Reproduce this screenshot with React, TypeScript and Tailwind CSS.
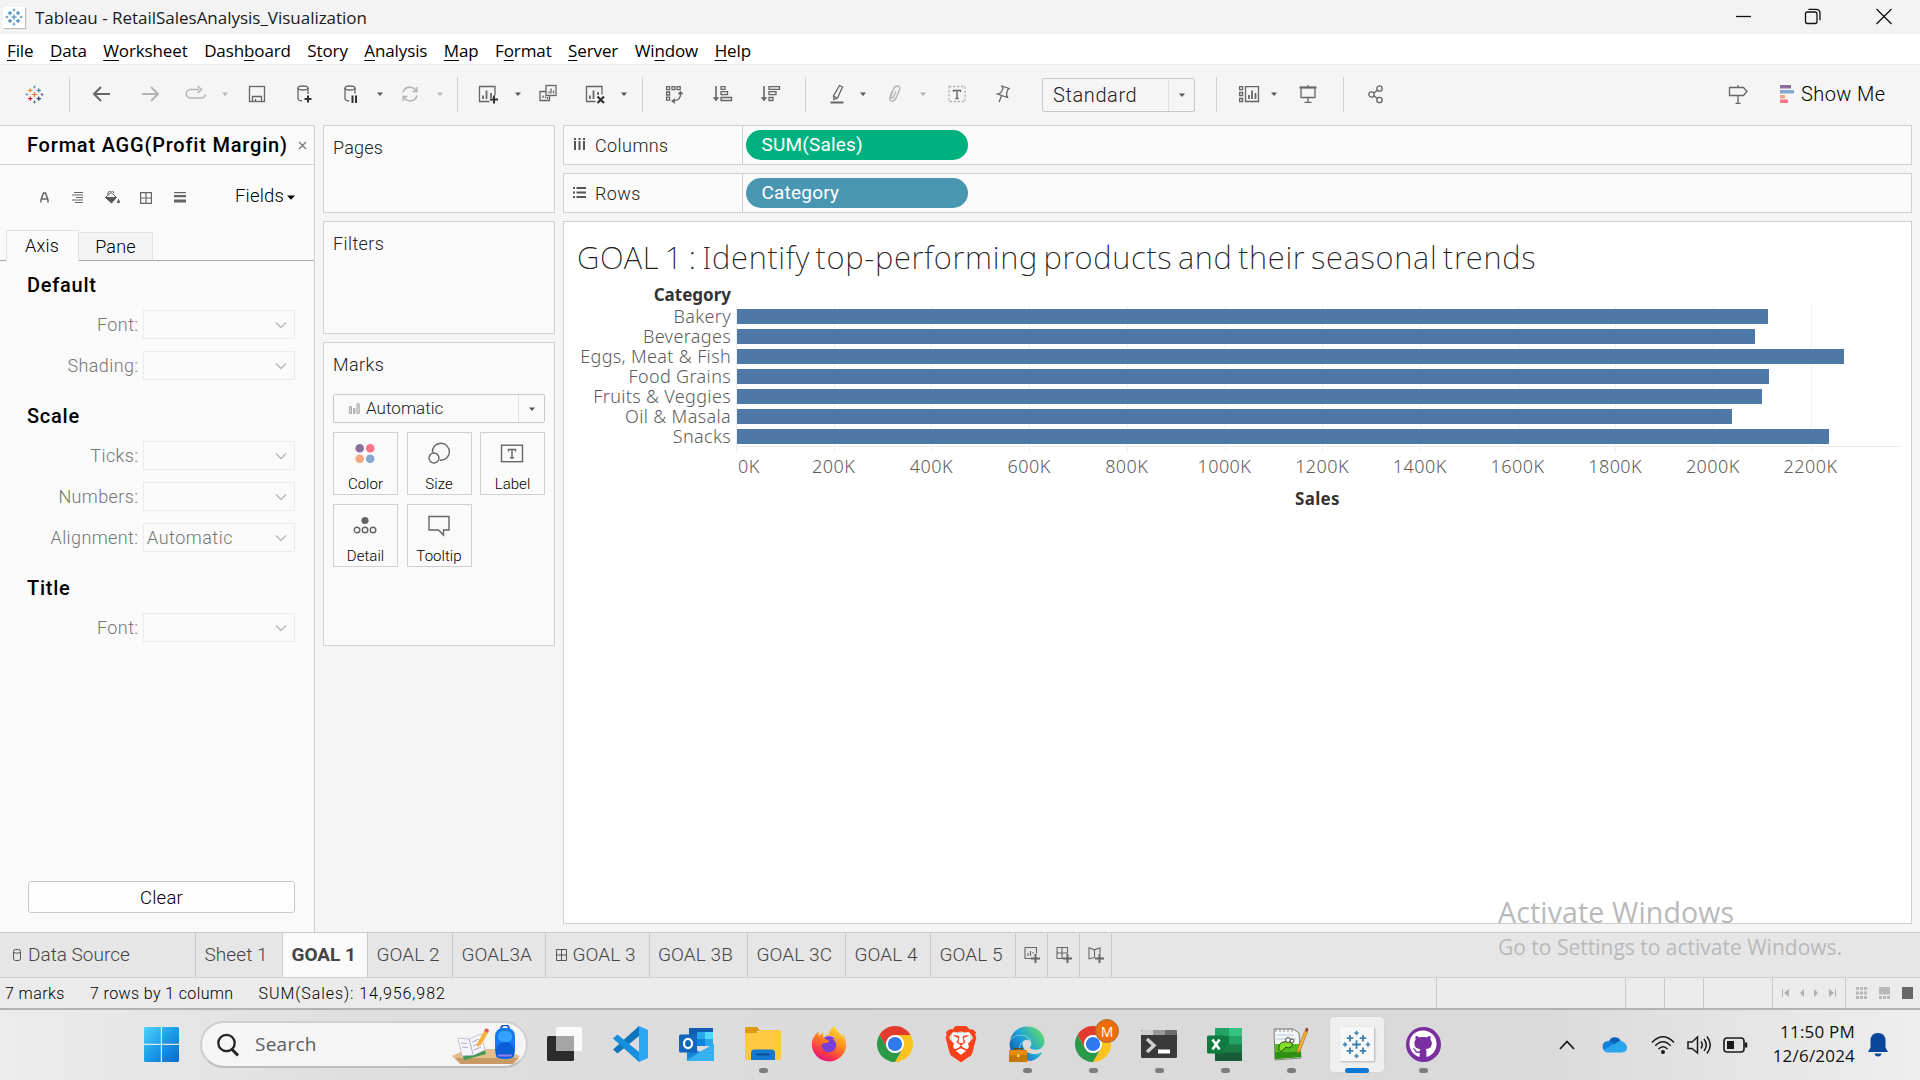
import React from "react";
import type { ReactNode } from "react";
import { FaEdge, FaFirefoxBrowser, FaGithub } from "react-icons/fa";
import { SiBrave } from "react-icons/si";

const UI = "font-['Roboto','Liberation_Sans',sans-serif]";
const SEGOE = "font-['Open_Sans','Noto_Sans',sans-serif]";
const TABLEAU = "font-['Noto_Sans','Open_Sans',sans-serif]";

/* ---------- shared drawings ---------- */

const PLUSES: [number, number, number, string][] = [
  [12, 12, 3.6, "#e8762c"],
  [6.6, 6.8, 2.7, "#eb912c"],
  [17.4, 6.8, 2.7, "#59879b"],
  [6.6, 17.2, 2.7, "#c72035"],
  [17.4, 17.2, 2.7, "#1f457e"],
  [12, 2.5, 1.8, "#7199a6"],
  [12, 21.5, 1.8, "#5b6591"],
  [2.5, 12, 1.8, "#7199a6"],
  [21.5, 12, 1.8, "#5b6591"],
];

function TableauMark({ size, mono }: { size: number; mono?: string }) {
  return (
    <svg width={size} height={size} viewBox="0 0 24 24" fill="none">
      {PLUSES.map(([x, y, r, c], i) => (
        <path
          key={i}
          d={`M${x - r} ${y}H${x + r}M${x} ${y - r}V${y + r}`}
          stroke={mono ?? c}
          strokeWidth={r > 2 ? 1.5 : 1.2}
        />
      ))}
    </svg>
  );
}

function Ico({ children, dim, ml }: { children: ReactNode; dim?: boolean; ml: string }) {
  return (
    <svg
      width="24"
      height="24"
      viewBox="0 0 24 24"
      fill="none"
      stroke={dim ? "#b4b4b4" : "#666666"}
      strokeWidth="1.3"
      className={`shrink-0 ${ml}`}
    >
      {children}
    </svg>
  );
}

function Caret({ ml, dim }: { ml: string; dim?: boolean }) {
  return (
    <svg width="8" height="8" viewBox="0 0 8 8" className={`shrink-0 ${ml}`}>
      <path d="M1 2.400h6L4 6z" fill={dim ? "#b4b4b4" : "#555"} />
    </svg>
  );
}

function Sep({ ml }: { ml: string }) {
  return <div className={`h-[35px] w-px shrink-0 bg-[#d0d0d0] ${ml}`} />;
}

/* ---------- top bars ---------- */

function TitleBar() {
  return (
    <div className={`flex h-[34px] shrink-0 items-center bg-[#f3f3f3] ${SEGOE}`}>
      <div className="ml-[3px] flex h-[21px] w-[22px] items-center justify-center bg-white shadow-[1px_1px_1px_#bbb]">
        <TableauMark size={18} mono="#3a87b7" />
      </div>
      <span className="ml-[10px] pt-[2px] text-[17px] tracking-[-0.02px] text-[#1a1a1a]">
        Tableau - RetailSalesAnalysis_Visualization
      </span>
      <svg className="ml-auto mr-[28px]" width="156" height="18" viewBox="0 0 156 18" fill="none" stroke="#111" strokeWidth="1.3">
        <path d="M0 8.500h15" />
        <rect x="69.500" y="4" width="11.500" height="11.500" rx="2" />
        <path d="M72.500 1.300h7.500q4 0 4 4v7" />
        <path d="M140.500 1l15 15M155.500 1l-15 15" />
      </svg>
    </div>
  );
}

const MENU: [string, string, string][] = [
  ["", "F", "ile"],
  ["", "D", "ata"],
  ["", "W", "orksheet"],
  ["Dash", "b", "oard"],
  ["S", "t", "ory"],
  ["", "A", "nalysis"],
  ["", "M", "ap"],
  ["F", "o", "rmat"],
  ["", "S", "erver"],
  ["Wi", "n", "dow"],
  ["", "H", "elp"],
];

function MenuBar() {
  return (
    <div className={`flex h-[30px] shrink-0 items-center gap-[16.5px] bg-white pl-[7px] pt-[3px] text-[17px] tracking-[-0.12px] text-black ${SEGOE}`}>
      {MENU.map(([a, b, c]) => (
        <span key={a + b + c}>
          {a}
          <span className="underline decoration-1 underline-offset-[3px]">{b}</span>
          {c}
        </span>
      ))}
    </div>
  );
}

function Toolbar() {
  return (
    <div className={`flex h-[61px] shrink-0 items-center border-t border-[#ececec] bg-[#f5f5f5] pb-[2px] pr-[35px] ${UI}`}>
      <div className="ml-[25px] mr-px">
        <TableauMark size={19} />
      </div>
      <Sep ml="ml-[24px]" />
      <Ico ml="ml-[20px]">
        <path d="M20 12H5M11 5l-7 7 7 7" strokeWidth="2" />
      </Ico>
      <Ico ml="ml-[24px]" dim>
        <path d="M4 12h15M13 5l7 7-7 7" strokeWidth="2" />
      </Ico>
      <Ico ml="ml-[22px]" dim>
        <path d="M15 7.500H6.500a4 4 0 0 0 0 8.500h11a4 4 0 0 0 3.800-3.500M13.500 4l4 3.500-4 3.500" strokeWidth="1.600" />
      </Ico>
      <Caret ml="ml-[13px]" dim />
      <Ico ml="ml-[16px]">
        <rect x="4.500" y="4.500" width="15" height="15" />
        <path d="M7.500 19.500v-5h9v5M10.500 19.500v-2.500" />
      </Ico>
      <Ico ml="ml-[24px]">
        <ellipse cx="10" cy="6" rx="5" ry="2" />
        <path d="M5 6v10.500q0 2 4 2.500M15 6v6" />
        <path d="M15 13.500v7M11.500 17h7" stroke="#333" strokeWidth="2" />
      </Ico>
      <Ico ml="ml-[22px]">
        <ellipse cx="11" cy="6" rx="5" ry="2" />
        <path d="M6 6v10.500q0 2 4 2.500M16 6v5.500" />
        <path d="M13.500 13.500v7.500M17 13.500v7.500" stroke="#333" strokeWidth="2" />
      </Ico>
      <Caret ml="ml-[13px]" />
      <Ico ml="ml-[14px]" dim>
        <path d="M5 10.500a7 7 0 0 1 13-1.500M19 13.500a7 7 0 0 1-13 1.500M18.800 5v4.500h-4.300M5.200 19v-4.500h4.300" strokeWidth="1.500" />
      </Ico>
      <Caret ml="ml-[14px]" dim />
      <Sep ml="ml-[13px]" />
      <Ico ml="ml-[18px]">
        <path d="M13.500 19.500h-10v-15h15.500v9" />
        <path d="M7 17v-3.500M10.500 17V8.500M15 16v-5" strokeWidth="1.800" />
        <path d="M18 13.500v8M14 17.500h8" stroke="#333" strokeWidth="2" />
      </Ico>
      <Caret ml="ml-[14px]" />
      <Ico ml="ml-[14px]">
        <rect x="10" y="3.500" width="10" height="10" />
        <path d="M10 9.500H4v9h9.500v-5M7 16v-2.500M9.500 16v-1.500M13 11.500V9.500M15 11.500V6.500M17.500 11.500V8.500M11.500 17v-2" />
      </Ico>
      <Ico ml="ml-[23px]">
        <path d="M12.500 19.500h-9v-15h15.500v8" />
        <path d="M7 17v-3.500M10.500 17V8.500M15 13V10" strokeWidth="1.800" />
        <path d="M14.500 14.500l6.500 6.500M21 14.500l-6.500 6.500" stroke="#333" strokeWidth="2.200" />
      </Ico>
      <Caret ml="ml-[13px]" />
      <Sep ml="ml-[14px]" />
      <Ico ml="ml-[19px]">
        <path d="M4.600 4.600h3v3h-3zM10 4.600h3v3h-3zM15.200 4.600h3v3h-3zM4.600 10h3v3h-3zM4.600 15.200h3v3h-3z" />
        <path d="M18.500 10.500q1 8-7.500 8.500" strokeWidth="1.500" />
        <path d="M16 12l2.500-3 2.500 3zM12.500 16.500l-3 2.500 3 2.500z" fill="#666" strokeWidth="0.500" />
      </Ico>
      <Ico ml="ml-[25px]">
        <path d="M5 4v13" strokeWidth="1.600" />
        <path d="M2.200 15.500h5.600L5 19z" fill="#666" strokeWidth="0.500" />
        <path d="M10 4.600h4v2.800h-4zM10 9.600h6.500v3H10zM10 15.500h10.500v3H10z" />
      </Ico>
      <Ico ml="ml-[24px]">
        <path d="M5 4v13" strokeWidth="1.600" />
        <path d="M2.200 15.500h5.600L5 19z" fill="#666" strokeWidth="0.500" />
        <path d="M10 4.600h10.500v2.800H10zM10 9.600h7v3h-7zM10 15.500h4v3h-4z" />
      </Ico>
      <Sep ml="ml-[22px]" />
      <Ico ml="ml-[20px]">
        <path d="M13.500 3.500l3 1.500-5 11-3.500 1.500-.5-3.500zM7.500 14l3.500 2" />
        <path d="M4.500 20.500h13" strokeWidth="2" />
      </Ico>
      <Caret ml="ml-[9px]" />
      <Ico ml="ml-[16px]" dim>
        <path d="M9 9l-2 6q-1 4 2 4t4-3l3.500-8q1-4-2-4t-4 3L8 14q-.5 2 1 2t2-2l2-5" strokeWidth="1.400" />
      </Ico>
      <Caret ml="ml-[12px]" dim />
      <Ico ml="ml-[18px]" dim>
        <rect x="4" y="4.500" width="16" height="15" strokeDasharray="2.500 1.500" />
        <path d="M8.500 10V8.500h7V10M12 8.500v8M10.300 16.500h3.400" stroke="#666" strokeWidth="1.400" />
      </Ico>
      <Ico ml="ml-[22px]">
        <path d="M11 4l7 2.500-1.500 1.500-1 4.500 1 3-10-3.500 3-1 2.500-4.500zM10.500 14L8 20" />
      </Ico>
      <div className="ml-[27px] mt-px flex h-[34px] w-[153px] shrink-0 items-center rounded-[2px] border border-[#c8c8c8] bg-[#f5f5f5]">
        <span className="flex-1 pl-[10px] text-[20px] font-light tracking-[0.6px] text-[#222]">Standard</span>
        <div className="flex h-full w-[26px] items-center justify-center border-l border-[#e0e0e0]">
          <Caret ml="" />
        </div>
      </div>
      <Sep ml="ml-[21px]" />
      <Ico ml="ml-[20px]">
        <path d="M2.600 4.600h3v3h-3zM2.600 10.500h3v3h-3zM2.600 16.500h3v3h-3zM8.500 4.600h13v14.900h-13z" />
        <path d="M12 17v-4M15 17V8.500M18.500 17v-6" strokeWidth="1.800" />
      </Ico>
      <Caret ml="ml-[9px]" />
      <Ico ml="ml-[18px]">
        <path d="M3.500 5.500h17" strokeWidth="2.200" />
        <path d="M5 6.500v9h14v-9M12 15.500v5M8.500 20.300h7M12 3v2" />
      </Ico>
      <Sep ml="ml-[23px]" />
      <Ico ml="ml-[20px]">
        <circle cx="7.500" cy="12.500" r="2.700" />
        <circle cx="15.500" cy="6.500" r="2.700" />
        <circle cx="15.500" cy="18" r="2.700" />
        <path d="M10 11l3.500-3M10 14l3.500 2.500" />
      </Ico>
      <Ico ml="ml-auto">
        <path d="M3.500 5.500h14l3.500 4-3.500 4h-14zM12 13.500v8M9.500 21.300h5M12 3v2.500" />
      </Ico>
      <svg className="ml-[30px] shrink-0" width="14" height="20" viewBox="0 0 14 20">
        <path d="M0 1h11v3.500H0z" fill="#8a6f9c" />
        <path d="M0 6h14v3.500H0z" fill="#84a9d0" />
        <path d="M0 11h5v3.500H0z" fill="#f4a582" />
        <path d="M0 15.500h8v3.500H0z" fill="#fb7185" />
      </svg>
      <span className="ml-[7px] w-[84px] whitespace-nowrap text-[20px] font-light tracking-[0.4px] text-black">Show Me</span>
    </div>
  );
}

/* ---------- format pane ---------- */

function Field({ label, value, mt }: { label: string; value?: string; mt: string }) {
  return (
    <div className={`flex h-[29px] items-center ${mt}`}>
      <span className="w-[138.500px] whitespace-nowrap text-right text-[18px] tracking-[0.4px] text-[#757575]">{label}</span>
      <div className="ml-[4.500px] flex h-[29px] w-[152px] items-center justify-between border border-[#ebebeb] pl-[3px] pr-[7px]">
        <span className="text-[18px] tracking-[0.500px] text-[#757575]">{value}</span>
        <svg width="12" height="8" viewBox="0 0 12 8" fill="none" stroke="#b8b8b8" strokeWidth="1.300">
          <path d="M1 1.500l5 5 5-5" />
        </svg>
      </div>
    </div>
  );
}

function Heading({ children, mt }: { children: string; mt: string }) {
  return <div className={`flex h-7 items-center pl-[27px] text-[20px] font-medium tracking-[0.75px] text-black ${mt}`}>{children}</div>;
}

function FormatPane() {
  return (
    <div className={`flex w-[315px] shrink-0 flex-col border-r border-t border-[#d0d0d0] bg-[#fafafa] font-light ${UI}`}>
      <div className="flex h-[39px] shrink-0 items-center border-b border-[#d0d0d0] pl-[27px]">
        <span className="w-[271px] whitespace-nowrap text-[20px] font-medium tracking-[0.8px] text-black">Format AGG(Profit Margin)</span>
        <svg width="9" height="9" viewBox="0 0 9 9" stroke="#777" strokeWidth="1.300">
          <path d="M1 1l7 7M8 1L1 8" />
        </svg>
      </div>
      <div className="flex h-[65px] shrink-0 items-center">
        <svg className="ml-[40px]" width="9" height="11" viewBox="0 0 9 11" fill="none" stroke="#666" strokeWidth="1.500">
          <path d="M1 10.500V8L3.500 1h2L8 8v2.500M1.500 7h6" />
        </svg>
        <svg className="ml-[23px]" width="11" height="11" viewBox="0 0 11 11" stroke="#666" strokeWidth="1">
          <path d="M2 .5h9M0 3h11M4 5.500h7M0 8h11M3 10.500h8" />
        </svg>
        <svg className="ml-[21px]" width="17" height="14" viewBox="0 0 17 14" fill="none" stroke="#555">
          <path d="M2 6l5-4.500 5 4.500M4 4a3 3 0 0 1 6-2" />
          <path d="M1.500 6.500h11L7.500 12z" fill="#555" />
          <path d="M14.500 8.500l1 3h-2z" fill="#555" />
        </svg>
        <svg className="ml-[19px]" width="12" height="12" viewBox="0 0 12 12" fill="none" stroke="#666">
          <path d="M.6.6h10.800v10.800H.6zM6 .6v10.800M.6 6h10.800" strokeWidth="1.200" />
        </svg>
        <svg className="ml-[22px]" width="12" height="11" viewBox="0 0 12 11" fill="#666">
          <path d="M0 0h12v1.200H0zM0 3h12v2.200H0zM0 7.500h12v3H0z" />
        </svg>
        <span className="-mt-px ml-[49px] text-[18.500px] tracking-[0.200px] text-black">Fields</span>
        <svg className="ml-[3px]" width="8" height="5" viewBox="0 0 8 5">
          <path d="M0 .5h8L4 4.700z" />
        </svg>
      </div>
      <div className="flex h-[31px] shrink-0 items-end text-[18px] tracking-[0.2px] text-black">
        <div className="h-full w-[6px] border-b border-[#a6a6a6]" />
        <div className="flex h-full w-[73px] items-center justify-center rounded-t-[2px] border border-b-0 border-[#e2e2e2] pb-[2px] pr-px">
          Axis
        </div>
        <div className="flex h-[29px] w-[74px] items-center justify-center border-b border-r border-t border-[#e2e2e2] border-b-[#a6a6a6] bg-[#f4f4f4]">
          Pane
        </div>
        <div className="h-full flex-1 border-b border-[#a6a6a6]" />
      </div>
      <Heading mt="mt-[10px]">Default</Heading>
      <Field mt="mt-[11px]" label="Font:" />
      <Field mt="mt-[12px]" label="Shading:" />
      <Heading mt="mt-[22px]">Scale</Heading>
      <Field mt="mt-[11px]" label="Ticks:" />
      <Field mt="mt-[12px]" label="Numbers:" />
      <Field mt="mt-[12px]" label="Alignment:" value="Automatic" />
      <Heading mt="mt-[22px]">Title</Heading>
      <Field mt="mt-[11px]" label="Font:" />
      <button className="mb-[19px] ml-[28px] mt-auto h-8 w-[267px] rounded-[3px] border border-[#c8c8c8] bg-[#fdfdfd] pt-[3px] text-[18.500px] tracking-[0.200px] text-black">
        Clear
      </button>
    </div>
  );
}

/* ---------- shelves ---------- */

function MarkButton({ label, children, w }: { label: string; children: ReactNode; w: string }) {
  return (
    <div className={`flex h-[63px] flex-col items-center border border-[#d0d0d0] ${w}`}>
      <svg className="mr-px mt-[7px]" width="28" height="28" viewBox="0 0 28 28" fill="none" stroke="#666" strokeWidth="1.400">
        {children}
      </svg>
      <span className="mt-[6px] text-[15px] leading-[20px] text-black">{label}</span>
    </div>
  );
}

function Cards() {
  return (
    <div className={`ml-2 flex w-[232px] shrink-0 flex-col text-[18px] font-light tracking-[0.2px] text-[#222] ${UI}`}>
      <div className="h-[88px] border border-[#d0d0d0] bg-[#fafafa] pl-[9px] pt-[8px]">Pages</div>
      <div className="mt-2 h-[113px] border border-[#d0d0d0] bg-[#fafafa] pl-[9px] pt-[8px] tracking-[0.400px]">Filters</div>
      <div className="mt-2 flex h-[304px] flex-col border border-[#d0d0d0] bg-[#fafafa] px-[9px] pt-[8px]">
        <span className="tracking-[0.400px]">Marks</span>
        <div className="mt-[16px] flex h-[29px] shrink-0 items-center rounded-[2px] border border-[#c8c8c8]">
          <svg className="ml-[15px] shrink-0" width="11" height="11" viewBox="0 0 11 11" fill="#d8d8d8" stroke="#aaa">
            <path d="M.5 3.500h2v7h-2zM4.500 5.500h1.500v5H4.500zM8 .8h2.200v9.700H8z" />
          </svg>
          <span className="ml-[6px] flex-1 text-[17px] tracking-[0.050px]">Automatic</span>
          <div className="flex h-full w-[26px] items-center justify-center border-l border-[#e0e0e0]">
            <Caret ml="" />
          </div>
        </div>
        <div className="mt-[9px] flex flex-wrap gap-x-[8.500px] gap-y-[9px] tracking-[0.050px]">
          <MarkButton label="Color" w="w-[65px]">
            <g stroke="none">
              <circle cx="8.700" cy="8.300" r="4.300" fill="#8a6f9c" />
              <circle cx="19.200" cy="8.300" r="4.300" fill="#fb7185" />
              <circle cx="8.700" cy="18.800" r="4.300" fill="#f4a67c" />
              <circle cx="19.200" cy="18.800" r="4.300" fill="#84a9d0" />
            </g>
          </MarkButton>
          <MarkButton label="Size" w="w-[65px]">
            <path d="M7.400 12.500a8.500 8.500 0 1 1 7.400 7.700" />
            <circle cx="9" cy="18" r="5" />
          </MarkButton>
          <MarkButton label="Label" w="w-[65px]">
            <rect x="3.500" y="5.200" width="21" height="16.500" />
            <path d="M10.500 11.500v-2h7v2M14 9.500v8M12 17.700h4" />
          </MarkButton>
          <MarkButton label="Detail" w="w-[65px]">
            <circle cx="14" cy="8.500" r="3.600" fill="#666" stroke="none" />
            <circle cx="6" cy="18" r="2.800" />
            <circle cx="14" cy="18" r="2.800" />
            <circle cx="22" cy="18" r="2.800" />
          </MarkButton>
          <MarkButton label="Tooltip" w="w-[65px]">
            <path d="M4 4.500h20V18h-5.500v5l-5-5H4z" />
          </MarkButton>
        </div>
      </div>
    </div>
  );
}

function Shelf({ label, pill, color, icon }: { label: string; pill: string; color: string; icon: ReactNode }) {
  return (
    <div className={`flex h-10 shrink-0 items-center border border-[#d0d0d0] bg-[#fafafa] ${UI}`}>
      <svg className="-mt-px ml-[9px]" width="13" height="13" viewBox="0 0 13 13" fill="#555">
        {icon}
      </svg>
      <span className="ml-[9px] flex-1 whitespace-nowrap text-[18px] font-light tracking-[0.42px] text-[#222]">{label}</span>
      <div className="flex h-full w-[1169px] items-center border-l border-[#d0d0d0] pl-[3px]">
        <div className={`flex h-[30px] w-[222px] items-center rounded-full pl-[15.500px] pt-px text-[19px] tracking-[0.200px] text-white ${color}`}>{pill}</div>
      </div>
    </div>
  );
}

/* ---------- view ---------- */

const SALES: [string, number][] = [
  ["Bakery", 1031],
  ["Beverages", 1018],
  ["Eggs, Meat & Fish", 1107],
  ["Food Grains", 1032],
  ["Fruits & Veggies", 1025],
  ["Oil & Masala", 995],
  ["Snacks", 1092],
];
const STEP = 97.7;

function View() {
  return (
    <div className={`mt-2 flex h-[703px] shrink-0 flex-col border border-[#d0d0d0] bg-white ${TABLEAU}`}>
      <h1 className="mt-[10px] h-[51px] whitespace-nowrap pl-[13px] text-[31px] font-extralight leading-[50px] tracking-[0.720px] [word-spacing:-3.2px] text-[#222]">
        GOAL 1 : Identify top-performing products and their seasonal trends
      </h1>
      <div className="flex h-[23px] items-center">
        <span className="w-[167px] text-right text-[17px] font-bold text-[#333]">Category</span>
      </div>
      <div className="flex">
        <div className="w-[167px] shrink-0 text-right text-[18px] font-light tracking-[0.350px] text-[#5c5c5c]">
          {SALES.map(([n]) => (
            <div key={n} className="h-5 whitespace-nowrap leading-[20px]">
              {n}
            </div>
          ))}
        </div>
        <div className="relative ml-[5px] h-[146px] w-[1164px]">
          {Array.from({ length: 12 }, (_, i) => (
            <div key={i} className="absolute top-0 h-full w-px bg-[#f0f0f0]" style={{ left: Math.round(i * STEP) }} />
          ))}
          <div className="absolute left-0 top-[140px] h-px w-full bg-[#eeeeee]" />
          <div className="relative flex flex-col gap-[5px] pl-px pt-[3px]">
            {SALES.map(([n, w]) => (
              <div key={n} className="h-[15px] bg-[#4e79a7]" style={{ width: w }} />
            ))}
          </div>
        </div>
      </div>
      <div className="flex h-[28px] items-center pl-[172px] text-[18px] font-light tracking-[0.450px] text-[#5c5c5c]">
        <span className="w-[48.850px] pl-[2px]">0K</span>
        {Array.from({ length: 11 }, (_, i) => (
          <span key={i} className="w-[97.700px] text-center">
            {(i + 1) * 200}K
          </span>
        ))}
      </div>
      <div className="flex h-[38px] items-center justify-center pl-[160px] text-[17px] font-bold tracking-[0.300px] text-[#333]">Sales</div>
    </div>
  );
}

/* ---------- sheet tabs and status ---------- */

const TABS: [string, string][] = [
  ["Sheet 1", "w-[87px]"],
  ["GOAL 1", "w-[85px]"],
  ["GOAL 2", "w-[85px]"],
  ["GOAL3A", "w-[93px]"],
  ["GOAL 3", "w-[103.500px]"],
  ["GOAL 3B", "w-[98.500px]"],
  ["GOAL 3C", "w-[98px]"],
  ["GOAL 4", "w-[85px]"],
  ["GOAL 5", "w-[85px]"],
];

function NewTab({ children }: { children: ReactNode }) {
  return (
    <div className="flex h-full w-8 items-center justify-center border-r border-[#cacaca]">
      <svg width="18" height="18" viewBox="0 0 18 18" fill="none" stroke="#666" strokeWidth="1.100">
        {children}
        <path d="M12.500 8v9M8 12.500h9" strokeWidth="2" />
      </svg>
    </div>
  );
}

function SheetTabs() {
  return (
    <div className={`flex h-[45px] shrink-0 items-center border-t border-[#cacaca] bg-[#e6e6e6] text-[19px] text-[#444] ${UI}`}>
      <div className="flex h-full w-[196px] items-center border-r border-[#cacaca] font-light">
        <svg className="ml-[13px]" width="8" height="12" viewBox="0 0 8 12" fill="none" stroke="#555">
          <rect x=".5" y=".5" width="7" height="11" rx="2" />
          <path d="M.5 3.500q3.500 1.500 7 0" />
        </svg>
        <span className="ml-[7px] pt-px text-[19px]">Data Source</span>
      </div>
      {TABS.map(([t, w]) => (
        <div
          key={t}
          className={`flex h-full items-center whitespace-nowrap border-r border-[#cacaca] pl-[8.500px] ${w} ${
            t === "GOAL 1" ? "bg-[#fafafa] font-bold" : "pt-px font-light tracking-[0.080px]"
          }`}
        >
          {t === "GOAL 3" && (
            <svg className="-mt-[2px] ml-px mr-[6px]" width="11" height="12" viewBox="0 0 11 12" fill="none" stroke="#555">
              <path d="M.5.500h10v11H.5zM5.500.500v11M.5 6h10" />
            </svg>
          )}
          {t}
        </div>
      ))}
      <NewTab>
        <path d="M8 12.500H2v-11h11.500v6M5 10V7M7.500 10V5M10 7.500V6" />
      </NewTab>
      <NewTab>
        <path d="M8 12.500H2v-11h10.500v6M7 1.500v11M2 7h10.500" />
      </NewTab>
      <NewTab>
        <path d="M7.500 11.500L2 12.800v-11l5.500 2 5.500-2v6M7.500 3.800V12" />
      </NewTab>
    </div>
  );
}

function StatusBar() {
  return (
    <div className={`flex h-[31px] shrink-0 items-center border-t border-[#cfcfcf] bg-[#ebebeb] pl-[5px] text-[16px] font-light text-black ${UI}`}>
      <span className="w-[85px] pt-px tracking-[0.400px]">7 marks</span>
      <span className="w-[168.500px] pt-px tracking-[0.380px]">7 rows by 1 column</span>
      <span className="pt-px tracking-[0.940px]">SUM(Sales): 14,956,982</span>
      <div className="ml-auto h-full w-[189px] border-l border-[#cacaca]" />
      <div className="h-full w-[39px] border-l border-[#cacaca]" />
      <div className="h-full w-[39px] border-l border-[#cacaca]" />
      <div className="h-full w-[69px] border-l border-[#cacaca]" />
      <div className="flex h-full w-[73px] items-center justify-center border-l border-[#cacaca]">
        <svg width="56" height="10" viewBox="0 0 56 10" fill="#b0b0b0">
          <path d="M1 1h1v8H1zM8 1v8L3 5zM23 1v8l-4-4zM33 1v8l4-4zM48 1v8l5-4zM54 1h1v8h-1z" />
        </svg>
      </div>
      <div className="flex h-full w-[75px] items-center gap-[12px] border-l border-[#cacaca] pl-[10px]">
        <svg width="11" height="12" viewBox="0 0 11 12" fill="#b8b8b8">
          <path d="M0 0h3v3H0zM4 0h3v3H4zM8 0h3v3H8zM0 4.500h3v3H0zM4 4.500h3v3H4zM8 4.500h3v3H8zM0 9h3v3H0zM4 9h3v3H4zM8 9h3v3H8z" />
        </svg>
        <svg width="11" height="12" viewBox="0 0 11 12" fill="#b8b8b8">
          <path d="M0 0h11v7.500H0zM0 9h3v3H0zM4 9h3v3H4zM8 9h3v3H8z" />
        </svg>
        <div className="h-[12px] w-[11px] bg-[#666]" />
      </div>
    </div>
  );
}

/* ---------- taskbar ---------- */

const CHROME_ARM = "M24 13H43.050A22 22 0 0 0 4.950 13L14.470 29.500A11 11 0 0 1 24 13Z";

function Chrome() {
  return (
    <svg width="36" height="36" viewBox="2 2 44 44">
      <path d={CHROME_ARM} fill="#e33b2e" />
      <path d={CHROME_ARM} fill="#fcc31e" transform="rotate(120 24 24)" />
      <path d={CHROME_ARM} fill="#2a9a48" transform="rotate(240 24 24)" />
      <circle cx="24" cy="24" r="11" fill="#fff" />
      <circle cx="24" cy="24" r="8.700" fill="#3079ee" />
    </svg>
  );
}

function TaskItem({ children, dot }: { children?: ReactNode; dot?: boolean }) {
  return (
    <div className="flex h-full w-[66px] flex-col items-center pt-[14px]">
      <div className="flex h-10 items-center">{children}</div>
      {dot && <div className="mt-[4px] h-[5px] w-[9px] rounded-full bg-[#7d7d7d]" />}
    </div>
  );
}

function SearchBox() {
  return (
    <div className="ml-[21px] flex h-[47px] w-[328px] shrink-0 items-center rounded-full border-2 border-b-[#bdbdbd] border-l-[#cfcfcf] border-r-[#cfcfcf] border-t-[#cfcfcf] bg-[#f5f5f5]">
      <svg className="ml-[14px]" width="24" height="24" viewBox="0 0 24 24" fill="none" stroke="#222" strokeWidth="2.300">
        <circle cx="10.500" cy="10" r="8.200" />
        <path d="M16 16.500l6 6" strokeWidth="3" />
      </svg>
      <span className="-mt-px ml-[15px] flex-1 text-[19px] tracking-[0.250px] text-[#5c5c5c]">Search</span>
      <svg className="mr-[5px]" width="70" height="40" viewBox="0 0 70 40">
        <path d="M1 31L16 24h38l15 7-8 8H9z" fill="#e3bd8c" />
        <path d="M4 33h64l-6 6H10z" fill="#c79a66" />
        <path d="M8 16l22-4 5 17-22 6z" fill="#3f9a52" />
        <path d="M7 13l11 1 12-5 4 16-11 5-12 1z" fill="#f6f6fa" stroke="#b9b9c6" strokeWidth=".8" />
        <path d="M18 14l4 15M10 18l6 .500M11 22l6 .500M21 17l7-3M22 21l7-3M23 25l7-3" stroke="#a9abc4" strokeWidth="1" />
        <path d="M26 19l7-13 4 2-7 12-4 2z" fill="#f6b13c" />
        <path d="M33 6l1.500-2.500q3-.500 3.500 2L37 8z" fill="#e8574f" />
        <path d="M50 4a4 4 0 0 1 8 0" fill="none" stroke="#1857c8" strokeWidth="2" />
        <rect x="44" y="3" width="20" height="31" rx="8" fill="#1479f0" />
        <rect x="47" y="6" width="14" height="11" rx="5" fill="#35a2ff" />
        <path d="M45 26a9 9 0 0 1 18 0v4q0 3-3 3H48q-3 0-3-3z" fill="#0b5fd6" />
        <path d="M47 30.500h14" stroke="#9a7bf0" strokeWidth="2" />
      </svg>
    </div>
  );
}

function Taskbar() {
  return (
    <div className={`flex h-[72px] shrink-0 items-center border-t-2 border-[#b2b2b2] bg-[linear-gradient(90deg,#ececec_0%,#dfdfdf_18%,#dadada_50%,#dadada_80%,#e8e8e8_94%,#eeeeee_100%)] pb-px ${SEGOE}`}>
      <svg className="ml-[144px] shrink-0" width="35" height="35" viewBox="0 0 35 35">
        <defs>
          <linearGradient id="win" x1="0" y1="0" x2="35" y2="35" gradientUnits="userSpaceOnUse">
            <stop offset="0" stopColor="#4fd3fc" />
            <stop offset=".5" stopColor="#1a9be8" />
            <stop offset="1" stopColor="#0669cf" />
          </linearGradient>
          <linearGradient id="fox" x1=".8" y1="0" x2=".3" y2="1">
            <stop offset="0" stopColor="#ffe843" />
            <stop offset=".45" stopColor="#ff8a1c" />
            <stop offset=".8" stopColor="#f8344c" />
            <stop offset="1" stopColor="#e0128a" />
          </linearGradient>
          <linearGradient id="edge" x1="0" y1=".9" x2="1" y2=".2">
            <stop offset="0" stopColor="#0b4fa0" />
            <stop offset=".5" stopColor="#1ba1dc" />
            <stop offset="1" stopColor="#5fdc6a" />
          </linearGradient>
        </defs>
        <path d="M1 0h15.800v16.800H0V1zM18 0h16l1 1v15.800H18zM0 18h16.800v17H1l-1-1zM18 18h17v16l-1 1H18z" fill="url(#win)" />
      </svg>
      <SearchBox />
      <div className="ml-[4px] flex h-full">
        <TaskItem>
          <svg width="36" height="34" viewBox="0 0 36 34">
            <rect x="0" y="9" width="27" height="25" rx="1.500" fill="#2b2b2b" />
            <rect x="9" y="0" width="26" height="24" rx="1.500" fill="#fafafa" />
            <path d="M9 9h18v15H9z" fill="#a5a5a5" />
          </svg>
        </TaskItem>
        <TaskItem>
          <svg width="36" height="36" viewBox="0 0 36 36">
            <path d="M26 0l9 4v28l-9 4z" fill="#2aa7f3" />
            <path d="M26 0v10L4.500 27.500 0 23.500z" fill="#0f75bd" />
            <path d="M26 36V26L4.500 8.500 0 12.500z" fill="#1690dd" />
          </svg>
        </TaskItem>
        <TaskItem>
          <svg width="36" height="34" viewBox="0 0 36 34">
            <path d="M10 1h24v16H10z" fill="#0f5db0" />
            <path d="M18 5h8v7h-8z" fill="#28a8ea" />
            <path d="M26 5h8v7h-8z" fill="#50d9ff" />
            <path d="M10 12h8v7h-8z" fill="#0b5aa6" />
            <path d="M18 12h8v7h-8z" fill="#0f84d8" />
            <path d="M26 12h8v7h-8z" fill="#28a8ea" />
            <path d="M8 17l13 8 14-8v17H8z" fill="#1a86da" />
            <path d="M8 33l27-16v15q0 2-2 2H9z" fill="#35b1f1" />
            <rect x="0" y="7.500" width="18" height="18" rx="1.500" fill="#1166bd" />
            <ellipse cx="9" cy="16.500" rx="4" ry="4.600" fill="none" stroke="#fff" strokeWidth="2.200" />
          </svg>
        </TaskItem>
        <TaskItem dot>
          <svg width="36" height="34" viewBox="0 0 36 34">
            <path d="M0 1.500Q0 0 1.500 0H12l3 4h-3v3H0z" fill="#dd9a0d" />
            <path d="M0 6h12l3.500-3H34.500Q36 3 36 4.500V31.500Q36 33 34.500 33H1.500Q0 33 0 31.500z" fill="#fcc940" />
            <path d="M6 33V26q0-3.500 3.500-3.500h17Q30 22.500 30 26v7z" fill="#1379cf" />
            <path d="M11.500 27.500h13" stroke="#0a4a8c" strokeWidth="1.800" />
          </svg>
        </TaskItem>
        <TaskItem>
          <div className="relative flex">
            <div className="absolute left-[9px] top-[10px] h-[18px] w-[18px] rounded-full bg-[#7a3fd6]" />
            <FaFirefoxBrowser size={36} fill="url(#fox)" className="relative" />
          </div>
        </TaskItem>
        <TaskItem>
          <Chrome />
        </TaskItem>
        <TaskItem>
          <div className="relative flex">
            <div className="absolute left-[9px] top-[7px] h-[22px] w-[18px] rounded-b-full rounded-t-md bg-white" />
            <SiBrave size={36} color="#f9421b" className="relative" />
          </div>
        </TaskItem>
        <TaskItem dot>
          <div className="relative flex">
            <FaEdge size={36} fill="url(#edge)" />
            <svg className="absolute bottom-0 left-0" width="19" height="14" viewBox="0 0 19 14">
              <path d="M6 2V.5h7V2" fill="none" stroke="#7b4a00" strokeWidth="1.500" />
              <rect x="0" y="2" width="18" height="12" fill="#c77708" />
              <path d="M0 2h18v5H0z" fill="#e38c12" />
              <path d="M8 6.500h2.500v2.500H8z" fill="#ffd76a" />
            </svg>
          </div>
        </TaskItem>
        <TaskItem dot>
          <div className="relative flex">
            <Chrome />
            <div className="absolute -top-[7px] left-[20px] flex h-[24px] w-[24px] items-center justify-center rounded-full border border-[#a3703e] bg-[#ee6c0a] text-[14px] text-white">
              M
            </div>
          </div>
        </TaskItem>
        <TaskItem dot>
          <svg width="36" height="28" viewBox="0 0 36 28">
            <rect width="36" height="28" rx="1.500" fill="#3a3a3a" />
            <path d="M1.500 0H12v5H0V1.500z" fill="#cfcfcf" />
            <path d="M12 0h12v5H12z" fill="#999" />
            <path d="M24 0h10.500L36 1.500V5H24z" fill="#6c6c6c" />
            <path d="M6 9l7 6.500L6 22" fill="none" stroke="#d0d0d0" strokeWidth="3.400" />
            <path d="M17 21.500h12" stroke="#fff" strokeWidth="4" />
          </svg>
        </TaskItem>
        <TaskItem dot>
          <svg width="36" height="33" viewBox="0 0 36 33">
            <path d="M8 0h27v33H8z" fill="#1a7d46" />
            <path d="M8 0h14v8.500H8z" fill="#21a366" />
            <path d="M22 0h13v8.500H22z" fill="#33c481" />
            <path d="M22 8.500h13v8H22z" fill="#21a366" />
            <path d="M8 8.500h14v8H8z" fill="#107c41" />
            <path d="M8 24.500h27V33H8z" fill="#185c37" />
            <rect x="0" y="7.500" width="18" height="18" rx="1.500" fill="#0f7a40" />
            <path d="M5.500 11.500l7 10M12.500 11.500l-7 10" stroke="#fff" strokeWidth="2.600" />
          </svg>
        </TaskItem>
        <TaskItem dot>
          <svg width="36" height="34" viewBox="0 0 36 34">
            <path d="M1 2h19l6 4 2 25L2 33z" fill="#f4f6f4" stroke="#7d7d7d" />
            <path d="M2 17h25l1 13L2 32z" fill="#54b91f" />
            <path d="M2 25h26v5L2 32z" fill="#2f8f12" />
            <path d="M3 8h18M3 12h20" stroke="#b4cbe6" />
            <path d="M3 1v4M7 1v4M11 1v4M15 1v4M19 1v4" stroke="#8b8b8b" />
            <path d="M6 19q2-5 7-4 2-3 5 0t0 5q-3 2-5 0l-4 4q-4 1-3-5z" fill="#86dc2b" stroke="#23520c" />
            <circle cx="15" cy="13" r="2.400" fill="#fff" stroke="#333" strokeWidth=".9" />
            <circle cx="19" cy="14" r="2" fill="#fff" stroke="#333" strokeWidth=".9" />
            <path d="M32 3.500l2.500 1.500L27 24l-3 2 .5-4z" fill="#f4b02c" stroke="#a66a12" strokeWidth=".6" />
            <path d="M32 3.500L33 .5l2.500 1.500-1 3z" fill="#9c3c3c" />
          </svg>
        </TaskItem>
        <div className="flex h-full w-[66px] flex-col items-center pr-px pt-[6px]">
          <div className="flex h-[57px] w-[56px] flex-col items-center rounded-[5px] border border-[#d6d6d6] bg-[#efefef] pt-[10px]">
            <div className="flex h-[34px] w-[34px] shrink-0 items-center justify-center bg-[#f7f7f7] shadow-[1px_1px_2px_#b0b0b0]">
              <TableauMark size={29} mono="#3d82b0" />
            </div>
            <div className="mt-[7px] h-[5px] w-6 shrink-0 rounded-full bg-[#0a78d4]" />
          </div>
        </div>
        <TaskItem dot>
          <div className="flex h-[35px] w-[35px] items-center justify-center rounded-full bg-[#7a2fa0]">
            <FaGithub size={28} color="#fff" />
          </div>
        </TaskItem>
      </div>
      <svg className="ml-auto shrink-0" width="16" height="10" viewBox="0 0 16 10" fill="none" stroke="#1a1a1a" strokeWidth="1.800">
        <path d="M1 9l7-7.500L15 9" />
      </svg>
      <svg className="ml-[27px] shrink-0" width="25" height="17" viewBox="0 0 25 17">
        <path d="M7 5a6.500 6.500 0 0 1 11.500-.500L13 10z" fill="#0b63b8" />
        <path d="M6 16a5.500 5.500 0 0 1 0-11q3 0 5 2l8 7z" fill="#1280d8" />
        <path d="M15 6.500q4-3.500 7 0 3 2 3 5 0 4.500-5 5H5q-2.500-1-3.500-2.500z" fill="#2aa5ee" />
      </svg>
      <svg className="ml-[24px] shrink-0" width="24" height="20" viewBox="0 0 24 20" fill="none" stroke="#1a1a1a" strokeWidth="1.600">
        <path d="M1 7.500Q12-4 23 7.500M4.300 10.800q7.700-8 15.400 0M7.500 14q4.500-4.500 9 0" />
        <circle cx="12" cy="17" r="2" fill="#1a1a1a" stroke="none" />
      </svg>
      <svg className="ml-[12px] shrink-0" width="25" height="20" viewBox="0 0 25 20" fill="none" stroke="#1a1a1a" strokeWidth="1.500">
        <path d="M1 7h4l5.500-5v16L5 13.500H1z" />
        <path d="M14 6.500q2.500 3.500 0 7M17 4q4.500 6 0 12M20 1.500q6.500 8.500 0 17" />
      </svg>
      <svg className="ml-[11px] shrink-0" width="25" height="16" viewBox="0 0 25 16" fill="none" stroke="#1a1a1a" strokeWidth="1.600">
        <rect x="1" y="1" width="20" height="14" rx="3" />
        <path d="M4 4h7v8H4z" fill="#1a1a1a" stroke="none" />
        <path d="M23 5.500v5" strokeWidth="2.500" />
      </svg>
      <div className="ml-[13px] w-[94px] shrink-0 pb-[2px] text-right text-[17px] leading-[24px] tracking-[0.200px] text-[#111]">
        <div>11:50 PM</div>
        <div>12/6/2024</div>
      </div>
      <svg className="ml-[13px] mr-[32px] shrink-0" width="20" height="24" viewBox="0 0 20 24" fill="#0a4699">
        <path d="M10 0q7.500 0 7.500 8v6.500L20 19H0l2.500-4.500V8Q2.500 0 10 0zM6.500 20.500h7q-.500 3-3.500 3t-3.500-3z" />
      </svg>
    </div>
  );
}

export default function App() {
  return (
    <div className="relative flex h-[1080px] w-[1920px] flex-col overflow-hidden bg-[#f5f5f5]">
      <TitleBar />
      <MenuBar />
      <Toolbar />
      <div className="flex h-[807px] shrink-0">
        <FormatPane />
        <Cards />
        <div className="ml-2 flex w-[1349px] shrink-0 flex-col">
          <Shelf
            label="Columns"
            pill="SUM(Sales)"
            color="bg-[#00b180]"
            icon={<path d="M1 0h2v2H1zM5.500 0h2v2h-2zM10 0h2v2h-2zM1 3h2v9H1zM5.500 3h2v9h-2zM10 3h2v9h-2z" />}
          />
          <div className="mt-2 flex flex-col">
            <Shelf
              label="Rows"
              pill="Category"
              color="bg-[#4996b2]"
              icon={<path d="M0 1h2v2H0zM0 5.500h2v2H0zM0 10h2v2H0zM3.500 1H13v2H3.500zM3.500 5.500H13v2H3.500zM3.500 10H13v2H3.500z" />}
            />
          </div>
          <View />
        </div>
      </div>
      <SheetTabs />
      <StatusBar />
      <Taskbar />
      <div className={`pointer-events-none absolute left-[1498px] top-[892px] whitespace-nowrap text-[#b9b9b9] ${SEGOE}`}>
        <div className="text-[28.500px] leading-[40px] tracking-[0.150px]">Activate Windows</div>
        <div className="text-[21px] leading-[30px]">Go to Settings to activate Windows.</div>
      </div>
    </div>
  );
}
